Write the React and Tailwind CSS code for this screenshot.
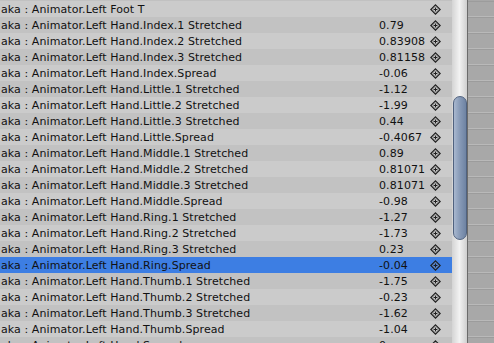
import React from "react";

const rows = [
  ["Left Foot T", ""],
  ["Left Hand.Index.1 Stretched", "0.79"],
  ["Left Hand.Index.2 Stretched", "0.83908"],
  ["Left Hand.Index.3 Stretched", "0.81158"],
  ["Left Hand.Index.Spread", "-0.06"],
  ["Left Hand.Little.1 Stretched", "-1.12"],
  ["Left Hand.Little.2 Stretched", "-1.99"],
  ["Left Hand.Little.3 Stretched", "0.44"],
  ["Left Hand.Little.Spread", "-0.4067"],
  ["Left Hand.Middle.1 Stretched", "0.89"],
  ["Left Hand.Middle.2 Stretched", "0.81071"],
  ["Left Hand.Middle.3 Stretched", "0.81071"],
  ["Left Hand.Middle.Spread", "-0.98"],
  ["Left Hand.Ring.1 Stretched", "-1.27"],
  ["Left Hand.Ring.2 Stretched", "-1.73"],
  ["Left Hand.Ring.3 Stretched", "0.23"],
  ["Left Hand.Ring.Spread", "-0.04"],
  ["Left Hand.Thumb.1 Stretched", "-1.75"],
  ["Left Hand.Thumb.2 Stretched", "-0.23"],
  ["Left Hand.Thumb.3 Stretched", "-1.62"],
  ["Left Hand.Thumb.Spread", "-1.04"],
  ["Left Hand.Spread", "0"],
];

function Diamond() {
  return (
    <svg width="11" height="11" viewBox="0 0 11 11" className="block">
      <polygon points="5.5,0.8 10.2,5.5 5.5,10.2 0.8,5.5" fill="none" stroke="#1e1e1e" strokeWidth="1.1" />
      <polygon points="5.5,2.6 8.4,5.5 5.5,8.4 2.6,5.5" fill="none" stroke="#8a8a8a" strokeWidth="0.6" />
      <line x1="5.5" y1="3.6" x2="5.5" y2="7.4" stroke="#1e1e1e" strokeWidth="1" />
      <line x1="3.6" y1="5.5" x2="7.4" y2="5.5" stroke="#1e1e1e" strokeWidth="1" />
    </svg>
  );
}

export default function App() {
  return (
    <div
      className="w-[494px] h-[343px] overflow-hidden flex bg-[#c2c2c2]"
      style={{ fontFamily: '"DejaVu Sans", Verdana, sans-serif' }}
    >
      <div className="w-[452px] flex flex-col pt-[1px] bg-[#c1c1c1]">
        {rows.map(([name, val], i) => {
          const sel = i === 16;
          const bg = sel ? "bg-[#3d7ee3]" : i % 2 === 0 ? "bg-[#cbcbcb]" : "bg-[#c2c2c2]";
          return (
            <div key={i} className={`h-[16px] shrink-0 flex items-center text-[11px] leading-none text-[#111] ${bg}`}>
              <div className="w-[379px] shrink-0 pl-[1px] whitespace-nowrap overflow-hidden tracking-[0.08px]">
                aka : Animator.{name}
              </div>
              <div className="w-[50px] shrink-0 whitespace-nowrap tracking-[0.1px]">{val}</div>
              <div className="ml-[1px]">
                <Diamond />
              </div>
            </div>
          );
        })}
      </div>
      <div className="w-[16px] shrink-0 relative bg-gradient-to-r from-[#d4d4d4] via-[#f2f2f2] to-[#cfcfcf] border-r border-[#6b6b6b]">
        <div className="absolute left-[1px] top-[96px] w-[14px] h-[144px] rounded-[7px] border border-[#50627f] bg-gradient-to-r from-[#a9b8cf] via-[#8699b6] to-[#6e83a3]" />
      </div>
      <div className="flex-1 flex flex-col pt-[1px] bg-[#a7a7a7]">
        {rows.map((_, i) => (
          <div key={i} className="h-[16px] shrink-0 border-b border-t border-t-[#9c9c9c] border-b-[#b9b9b9] bg-[#a8a8a8]" />
        ))}
      </div>
    </div>
  );
}
